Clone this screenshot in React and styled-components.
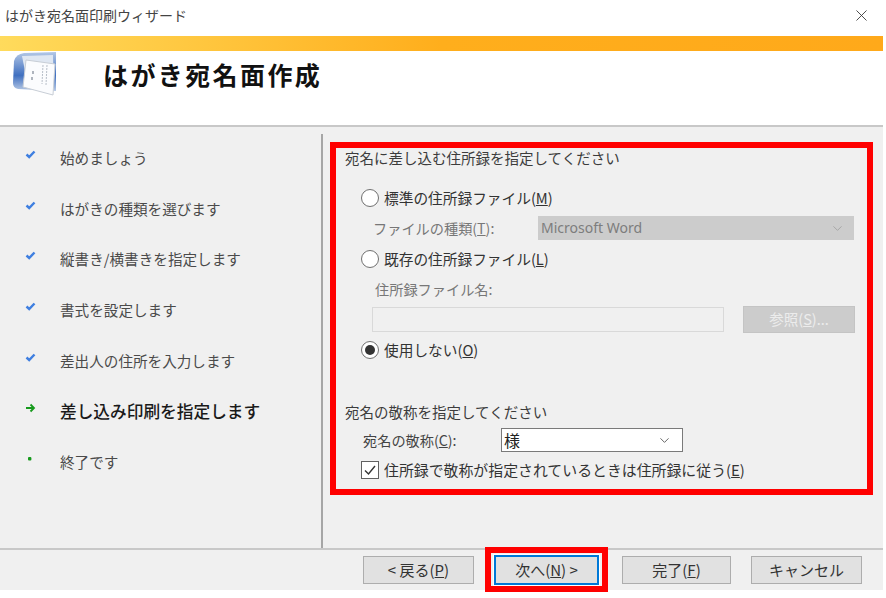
import React from "react";
import styled, { createGlobalStyle } from "styled-components";
import { ChevronDown, X } from "lucide-react";

const GlobalStyle = createGlobalStyle`
  html, body {
    margin: 0;
    padding: 0;
    background: #ffffff;
  }
  * {
    box-sizing: border-box;
  }
`;

const Wizard = styled.div`
  width: 883px;
  height: 598px;
  display: flex;
  flex-direction: column;
  overflow: hidden;
  background: #ffffff;
  color: #3c3c3c;
  font-family: "Noto Sans CJK JP", "Noto Sans", sans-serif;
  font-size: 14.5px;
  line-height: 20px;
`;

const TitleBar = styled.div`
  height: 36px;
  flex: none;
  display: flex;
  align-items: center;
  justify-content: space-between;
  padding: 0 12px 6px 5px;
  font-size: 14px;
  color: #444444;
`;

const Ribbon = styled.div`
  height: 15px;
  flex: none;
  background: linear-gradient(90deg, #ffdb5c 0%, #ffae1c 50%, #ffa91a 100%);
`;

const Header = styled.div`
  height: 76px;
  flex: none;
  display: flex;
  align-items: flex-start;
  padding-left: 12px;
  background: #ffffff;
  border-bottom: 2px solid #c8c8c8;
`;

const HeaderTitle = styled.h1`
  margin: 5px 0 0 45px;
  font-size: 25px;
  line-height: 36px;
  font-weight: 700;
  letter-spacing: 2.4px;
  color: #111111;
`;

const Body = styled.div`
  flex: 1;
  display: flex;
  background: #f0f0f0;
`;

const Sidebar = styled.ul`
  width: 323px;
  flex: none;
  margin: 7px 0 0;
  padding: 14px 0 0 25px;
  list-style: none;
  border-right: 2px solid #a6a6a6;
`;

const Step = styled.li`
  height: 50.7px;
  display: flex;
  align-items: flex-start;
  font-size: ${(p) => (p.$current ? "16.7px" : "14.6px")};
  font-weight: ${(p) => (p.$current ? 500 : 400)};
  color: ${(p) => (p.$current ? "#1a1a1a" : "#4a4a4a")};
`;

const StepMark = styled.span`
  width: 35px;
  flex: none;
  height: 20px;
  padding-top: 2px;
  display: flex;
  align-items: flex-start;
`;

const Panel = styled.section`
  width: 543px;
  height: 353px;
  margin: 15px 0 0 7px;
  padding: 0 0 0 9px;
  border: 6px solid #ff0000;
`;

const SectionTitle = styled.div`
  height: 20px;
  margin-top: ${(p) => p.$top || 0}px;
  font-size: 14.5px;
  color: #3c3c3c;
`;

const OptionRow = styled.label`
  height: 20px;
  margin: ${(p) => p.$top}px 0 0 16px;
  display: flex;
  align-items: center;
  gap: 5px;
  font-size: 14.7px;
  color: #333333;
`;

const Radio = styled.span`
  width: 18px;
  height: 18px;
  flex: none;
  display: flex;
  align-items: center;
  justify-content: center;
  border: 1.5px solid #707070;
  border-radius: 50%;
  background: #ffffff;

  &::after {
    content: "";
    display: ${(p) => (p.$checked ? "block" : "none")};
    width: 10px;
    height: 10px;
    border-radius: 50%;
    background: #333333;
  }
`;

const FieldRow = styled.div`
  height: 24px;
  margin: ${(p) => p.$top}px 0 0 ${(p) => p.$left}px;
  display: flex;
  align-items: center;
  font-size: 14.2px;
  color: ${(p) => p.$color || "#777777"};
`;

const FieldLabel = styled.span`
  width: ${(p) => p.$width}px;
  flex: none;
`;

const DisabledSelect = styled.div`
  width: 316px;
  height: 24px;
  display: flex;
  align-items: center;
  justify-content: space-between;
  padding: 0 9px 0 3px;
  background: #cccccc;
  color: #7d7d7d;
  font-family: "Noto Sans", sans-serif;
  font-size: 14px;
`;

const PathInput = styled.div`
  width: 352px;
  height: 25px;
  background: #f0f0f0;
  border: 1px solid #d9d9d9;
`;

const BrowseButton = styled.div`
  width: 112px;
  height: 27px;
  margin-left: 19px;
  display: flex;
  align-items: center;
  justify-content: center;
  background: #cccccc;
  border: 1px solid #c4c4c4;
  color: #ececec;
  font-size: 14.5px;
`;

const ValueSelect = styled.div`
  width: 182px;
  height: 24px;
  display: flex;
  align-items: center;
  justify-content: space-between;
  padding: 0 10px 0 2px;
  background: #ffffff;
  border: 1px solid #7a7a7a;
  color: #222222;
  font-size: 16px;
`;

const CheckRow = styled.label`
  height: 20px;
  margin: ${(p) => p.$top}px 0 0 16px;
  display: flex;
  align-items: center;
  gap: 5px;
  font-size: 14.9px;
  color: #333333;
`;

const CheckBox = styled.span`
  width: 18px;
  height: 18px;
  flex: none;
  display: flex;
  align-items: center;
  justify-content: center;
  background: #ffffff;
  border: 1px solid #606060;
`;

const Footer = styled.div`
  height: 42px;
  flex: none;
  display: flex;
  align-items: center;
  padding-left: 363px;
  background: #f0f0f0;
  border-top: 2px solid #c8c8c8;
`;

const WizardButton = styled.button`
  width: ${(p) => p.$width}px;
  height: 28px;
  flex: none;
  margin-left: ${(p) => p.$left || 0}px;
  padding: 0;
  background: #e1e1e1;
  border: 1px solid #adadad;
  color: #333333;
  font-family: inherit;
  font-size: 15px;
  line-height: 20px;
`;

const NextHighlight = styled.div`
  width: 123px;
  height: 45px;
  flex: none;
  margin: -1px 0 0 11px;
  display: flex;
  align-items: center;
  justify-content: center;
  border: 6px solid #ff0000;
  position: relative;
`;

const NextButton = styled(WizardButton)`
  height: 30px;
  border: 2px solid #0078d7;
  outline: 1px solid #ffffff;
`;

const BottomStrip = styled.div`
  height: 8px;
  flex: none;
  background: #ffffff;
`;

const CheckMark = () => (
  <svg width="11" height="10" viewBox="0 0 11 10">
    <path d="M1.5 4.5 L4.2 7 L9.5 1.5" fill="none" stroke="#3f7fe0" strokeWidth="2.4" />
  </svg>
);

const ArrowMark = () => (
  <svg width="11" height="10" viewBox="0 0 11 10">
    <path d="M1 5 H8.5 M5.5 1.5 L9 5 L5.5 8.5" fill="none" stroke="#169a1c" strokeWidth="1.8" />
  </svg>
);

const DotMark = () => (
  <svg width="11" height="10" viewBox="0 0 11 10">
    <rect x="3" y="3" width="3.4" height="3.4" rx="1" fill="#169a1c" />
  </svg>
);

const WizardIcon = () => (
  <svg width="46" height="46" viewBox="0 0 46 46">
    <defs>
      <linearGradient id="cover" x1="0" y1="0" x2="0" y2="1">
        <stop offset="0" stopColor="#b4c8e6" />
        <stop offset="0.6" stopColor="#3f6fc0" />
        <stop offset="1" stopColor="#b9cbe6" />
      </linearGradient>
    </defs>
    <path d="M2 10 Q4 3 12 2 L44 1 L44 40 L6 38 Q1 37 1 32 Z" fill="url(#cover)" />
    <path d="M10 5 L41 4 L42 38 L16 35 Z" fill="#dfe7f2" />
    <path d="M14 9 L43 13 L41 44 L11 36 Z" fill="#fbfcfe" stroke="#c8ced6" />
    <path d="M35 14 L34 34 M31 14 L30 33" stroke="#b7bec8" strokeWidth="1" strokeDasharray="2 1" />
    <path d="M21 20 V23 M20 26 V29" stroke="#8f98a4" strokeWidth="1.4" />
  </svg>
);

const steps = [
  { label: "始めましょう", mark: "done" },
  { label: "はがきの種類を選びます", mark: "done" },
  { label: "縦書き/横書きを指定します", mark: "done" },
  { label: "書式を設定します", mark: "done" },
  { label: "差出人の住所を入力します", mark: "done" },
  { label: "差し込み印刷を指定します", mark: "current" },
  { label: "終了です", mark: "todo" },
];

const marks = { done: CheckMark, current: ArrowMark, todo: DotMark };

const App = () => (
  <Wizard>
    <GlobalStyle />
    <TitleBar>
      <span>はがき宛名面印刷ウィザード</span>
      <X size={19} strokeWidth={1.1} color="#333333" />
    </TitleBar>
    <Ribbon />
    <Header>
      <WizardIcon />
      <HeaderTitle>はがき宛名面作成</HeaderTitle>
    </Header>
    <Body>
      <Sidebar>
        {steps.map((step) => {
          const Mark = marks[step.mark];
          return (
            <Step key={step.label} $current={step.mark === "current"}>
              <StepMark>
                <Mark />
              </StepMark>
              {step.label}
            </Step>
          );
        })}
      </Sidebar>
      <Panel>
        <SectionTitle>宛名に差し込む住所録を指定してください</SectionTitle>
        <OptionRow $top={20}>
          <Radio />
          <span>標準の住所録ファイル(<u>M</u>)</span>
        </OptionRow>
        <FieldRow $top={8} $left={28}>
          <FieldLabel $width={165}>ファイルの種類(<u>T</u>):</FieldLabel>
          <DisabledSelect>
            Microsoft Word
            <ChevronDown size={15} strokeWidth={1.2} color="#9a9a9a" />
          </DisabledSelect>
        </FieldRow>
        <OptionRow $top={9}>
          <Radio />
          <span>既存の住所録ファイル(<u>L</u>)</span>
        </OptionRow>
        <FieldRow $top={8} $left={30}>住所録ファイル名:</FieldRow>
        <FieldRow $top={6} $left={27}>
          <PathInput />
          <BrowseButton>参照(<u>S</u>)...</BrowseButton>
        </FieldRow>
        <OptionRow $top={9}>
          <Radio $checked />
          <span>使用しない(<u>O</u>)</span>
        </OptionRow>
        <SectionTitle $top={42}>宛名の敬称を指定してください</SectionTitle>
        <FieldRow $top={6} $left={18} $color="#444444">
          <FieldLabel $width={138}>宛名の敬称(<u>C</u>):</FieldLabel>
          <ValueSelect>
            様
            <ChevronDown size={15} strokeWidth={1.3} color="#444444" />
          </ValueSelect>
        </FieldRow>
        <CheckRow $top={8}>
          <CheckBox>
            <svg width="14" height="14" viewBox="0 0 14 14">
              <path d="M2 7.5 L5.5 11 L12 3" fill="none" stroke="#333333" strokeWidth="1.4" />
            </svg>
          </CheckBox>
          <span>住所録で敬称が指定されているときは住所録に従う(<u>E</u>)</span>
        </CheckRow>
      </Panel>
    </Body>
    <Footer>
      <WizardButton $width={111}>&lt; 戻る(<u>P</u>)</WizardButton>
      <NextHighlight>
        <NextButton $width={105}>次へ(<u>N</u>) &gt;</NextButton>
      </NextHighlight>
      <WizardButton $width={109} $left={14}>完了(<u>F</u>)</WizardButton>
      <WizardButton $width={111} $left={20}>キャンセル</WizardButton>
    </Footer>
    <BottomStrip />
  </Wizard>
);

export default App;
